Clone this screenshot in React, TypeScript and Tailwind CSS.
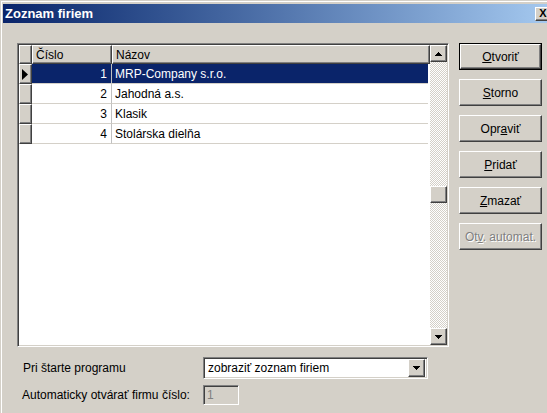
import React from "react";

const raised =
  "bg-[#d4d0c8] border border-t-white border-l-white border-r-[#404040] border-b-[#404040] shadow-[inset_-1px_-1px_0_#808080]";
const sunken =
  "border border-t-[#808080] border-l-[#808080] border-r-white border-b-white shadow-[inset_1px_1px_0_#404040,inset_-1px_-1px_0_#d4d0c8]";
const dither =
  "bg-[repeating-conic-gradient(#d4d0c8_0%_25%,#ffffff_0%_50%)] bg-[length:2px_2px]";

function Tri({ dir }: { dir: "up" | "down" }) {
  return (
    <svg width="7" height="4" viewBox="0 0 7 4" shapeRendering="crispEdges">
      {dir === "up" ? (
        <polygon points="3.5,0 7,4 0,4" fill="#000" />
      ) : (
        <polygon points="0,0 7,0 3.5,4" fill="#000" />
      )}
    </svg>
  );
}

function ScrollButton({ dir }: { dir: "up" | "down" }) {
  return (
    <div className={`${raised} h-[17px] w-[17px] flex items-center justify-center shrink-0`}>
      <Tri dir={dir} />
    </div>
  );
}

type Row = { id: number; name: string };
const rows: Row[] = [
  { id: 1, name: "MRP-Company s.r.o." },
  { id: 2, name: "Jahodná a.s." },
  { id: 3, name: "Klasik" },
  { id: 4, name: "Stolárska dielňa" },
];

function Button({
  children,
  isDefault,
}: {
  children: React.ReactNode;
  isDefault?: boolean;
}) {
  const inner = (
    <div className={`${raised} h-full w-full flex items-center justify-center`}>
      {children}
    </div>
  );
  return isDefault ? (
    <div className="h-[27px] w-[83px] border border-black">{inner}</div>
  ) : (
    <div className="h-[27px] w-[83px]">{inner}</div>
  );
}

export default function App() {
  return (
    <div className="w-[547px] h-[413px] overflow-hidden bg-[#d4d0c8] font-['Liberation_Sans',Arial,sans-serif] text-[12px] text-black flex flex-col border-t border-l border-t-[#d4d0c8] border-l-[#d4d0c8]">
      <div className="border-t border-l border-t-white border-l-white pt-[2px] pl-[1px] flex flex-col flex-1">
        {/* title bar */}
        <div className="h-[19px] flex items-center bg-gradient-to-r from-[#0a246a] to-[#a6caf0] -mr-[6px]">
          <span className="pl-[2px] text-white font-bold text-[13px] leading-none flex-1">
            Zoznam firiem
          </span>
          <div className={`${raised} h-[14px] w-[16px] mr-[2px] flex items-center justify-center`}>
            <span className="font-bold text-[11px] leading-none">X</span>
          </div>
        </div>

        {/* body */}
        <div className="pl-[14px] pt-[20px] flex flex-col">
          <div className="flex gap-[10px]">
            {/* grid */}
            <div className={`${sunken} w-[432px] h-[304px] p-[1px] bg-white flex`}>
              <div className="flex-1 flex flex-col">
                {/* header */}
                <div className="flex h-[19px] shrink-0">
                  <div className={`${raised} w-[13px] h-full`} />
                  <div className={`${raised} w-[80px] h-full flex items-center pl-[3px]`}>
                    Číslo
                  </div>
                  <div className={`${raised} flex-1 h-full flex items-center pl-[3px]`}>
                    Názov
                  </div>
                </div>
                {rows.map((r, i) => {
                  const sel = i === 0;
                  return (
                    <div key={r.id} className="flex h-[20px] shrink-0">
                      <div className={`${raised} w-[13px] h-full flex items-center pl-[2px]`}>
                        {sel && (
                          <svg width="6" height="11" viewBox="0 0 6 11">
                            <polygon points="0,0 6,5.5 0,11" fill="#000" />
                          </svg>
                        )}
                      </div>
                      <div
                        className={`w-[80px] h-full flex items-center justify-end pr-[4px] border-r border-b border-r-[#c0c0c0] border-b-[#d4d0c8] ${
                          sel ? "bg-[#0a246a] text-white" : "bg-white"
                        }`}
                      >
                        {r.id}
                      </div>
                      <div
                        className={`flex-1 h-full flex items-center pl-[3px] border-b border-b-[#d4d0c8] mr-[2px] ${
                          sel ? "bg-[#0a246a] text-white" : "bg-white"
                        }`}
                      >
                        {r.name}
                      </div>
                    </div>
                  );
                })}
              </div>
              {/* vertical scrollbar */}
              <div className="w-[17px] flex flex-col">
                <ScrollButton dir="up" />
                <div className={`${dither} h-[124px]`} />
                <div className={`${raised} h-[17px] w-[17px] shrink-0`} />
                <div className={`${dither} flex-1`} />
                <ScrollButton dir="down" />
              </div>
            </div>

            {/* buttons */}
            <div className="flex flex-col gap-[9px]">
              <Button isDefault>
                <span>
                  <span className="underline">O</span>tvoriť
                </span>
              </Button>
              <Button>
                <span>
                  <span className="underline">S</span>torno
                </span>
              </Button>
              <Button>
                <span>
                  Opr<span className="underline">a</span>viť
                </span>
              </Button>
              <Button>
                <span>
                  <span className="underline">P</span>ridať
                </span>
              </Button>
              <Button>
                <span>
                  <span className="underline">Z</span>mazať
                </span>
              </Button>
              <Button>
                <span className="text-[#808080] [text-shadow:1px_1px_0_#ffffff]">
                  Ot<span className="underline">v</span>. automat.
                </span>
              </Button>
            </div>
          </div>

          {/* startup options */}
          <div className="mt-[10px] flex items-center h-[22px]">
            <div className="w-[186px] pl-[6px]">Pri štarte programu</div>
            <div className={`${sunken} bg-white w-[225px] h-[22px] p-[2px] flex items-center`}>
              <span className="flex-1 pl-[2px]">zobraziť zoznam firiem</span>
              <div className={`${raised} w-[17px] h-[18px] flex items-center justify-center`}>
                <Tri dir="down" />
              </div>
            </div>
          </div>
          <div className="mt-[6px] flex items-center h-[20px]">
            <div className="w-[186px] pl-[5px]">Automaticky otvárať firmu číslo:</div>
            <div className={`${sunken} w-[36px] h-[20px] pl-[3px] flex items-center text-[#808080]`}>
              1
            </div>
          </div>
        </div>
      </div>
    </div>
  );
}
